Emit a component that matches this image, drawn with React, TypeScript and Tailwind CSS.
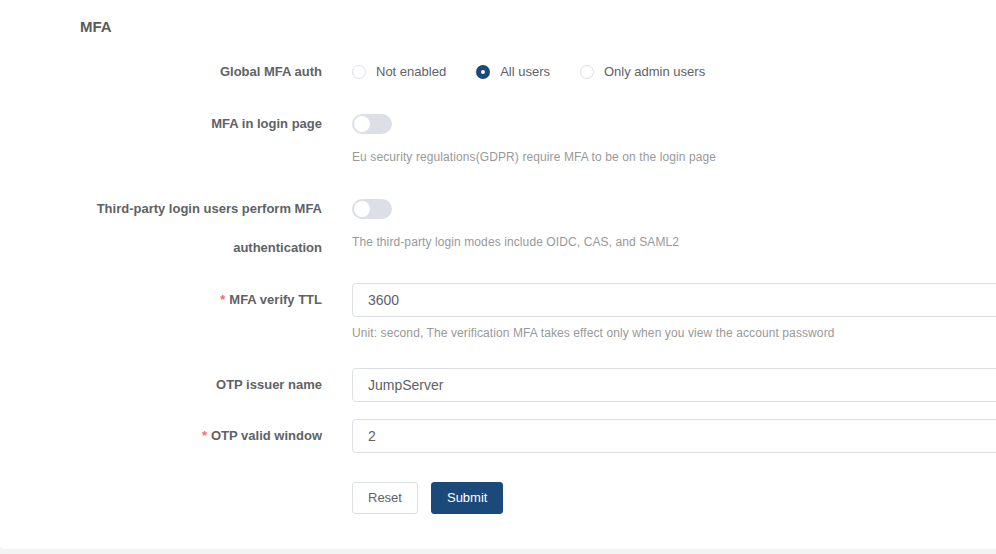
import React from "react";

const font = { fontFamily: '"Liberation Sans", Arial, sans-serif' };

function Label({ text, required, className = "" }: { text: React.ReactNode; required?: boolean; className?: string }) {
  return (
    <div className={`w-[352px] shrink-0 pr-[30px] text-right text-[13px] font-bold text-[#606266] ${className}`}>
      {required && <span className="mr-[4px] text-[#f56c6c]">*</span>}
      {text}
    </div>
  );
}

function Radio({ label, checked }: { label: string; checked?: boolean }) {
  return (
    <label className="mr-[30px] flex items-center">
      {checked ? (
        <span className="flex h-[14px] w-[14px] items-center justify-center rounded-full bg-[#1b4a7a]">
          <span className="h-[4px] w-[4px] rounded-full bg-white" />
        </span>
      ) : (
        <span className="h-[14px] w-[14px] rounded-full border border-[#dcdfe6] bg-white" />
      )}
      <span className="ml-[10px] text-[13px] text-[#606266]">{label}</span>
    </label>
  );
}

function Toggle() {
  return (
    <div className="relative h-[20px] w-[40px] rounded-full bg-[#dcdfe6]">
      <span className="absolute left-[2px] top-[2px] h-[16px] w-[16px] rounded-full bg-white" />
    </div>
  );
}

function Help({ children }: { children: React.ReactNode }) {
  return <div className="text-[12px] leading-[26px] tracking-[0.1px] text-[#999]">{children}</div>;
}

function Input({ value }: { value: string }) {
  return (
    <div className="flex h-[34px] w-full items-center rounded-[4px] border border-[#dcdfe6] px-[15px] text-[14px] text-[#606266]">
      {value}
    </div>
  );
}

export default function App() {
  return (
    <div className="w-full overflow-hidden bg-[#f3f3f4]" style={font}>
      <div className="h-[549px] w-[1100px] rounded-bl-[4px] bg-white pt-[17px]">
        <h3 className="pl-[80px] text-[15px] font-bold leading-[20px] text-[#5c5c5c]">MFA</h3>

        {/* Global MFA auth */}
        <div className="mt-[15px] flex leading-[40px]">
          <Label text="Global MFA auth" />
          <div className="flex items-center">
            <Radio label="Not enabled" />
            <Radio label="All users" checked />
            <Radio label="Only admin users" />
          </div>
        </div>

        {/* MFA in login page */}
        <div className="mt-[12px] flex leading-[40px]">
          <Label text="MFA in login page" />
          <div>
            <div className="flex h-[40px] items-center">
              <Toggle />
            </div>
            <Help>Eu security regulations(GDPR) require MFA to be on the login page</Help>
          </div>
        </div>

        {/* Third-party */}
        <div className="mt-[19px] flex">
          <Label className="leading-[39px]" text={<>Third-party login users perform MFA<br />authentication</>} />
          <div>
            <div className="flex h-[40px] items-center">
              <Toggle />
            </div>
            <Help>The third-party login modes include OIDC, CAS, and SAML2</Help>
          </div>
        </div>

        {/* MFA verify TTL */}
        <div className="mt-[13px] flex leading-[40px]">
          <Label text="MFA verify TTL" required />
          <div className="flex-1">
            <div className="flex h-[40px] items-center">
              <Input value="3600" />
            </div>
            <Help>Unit: second, The verification MFA takes effect only when you view the account password</Help>
          </div>
        </div>

        {/* OTP issuer name */}
        <div className="mt-[19px] flex leading-[40px]">
          <Label text="OTP issuer name" />
          <div className="flex h-[40px] flex-1 items-center">
            <Input value="JumpServer" />
          </div>
        </div>

        {/* OTP valid window */}
        <div className="mt-[11px] flex leading-[40px]">
          <Label text="OTP valid window" required />
          <div className="flex h-[40px] flex-1 items-center">
            <Input value="2" />
          </div>
        </div>

        {/* Actions */}
        <div className="mt-[26px] flex">
          <div className="w-[352px] shrink-0" />
          <div className="flex gap-[13px]">
            <button className="h-[32px] rounded-[3px] border border-[#dcdfe6] bg-white px-[15px] text-[13px] text-[#606266]">
              Reset
            </button>
            <button className="h-[32px] rounded-[3px] border border-[#1b4a7a] bg-[#1b4a7a] px-[15px] text-[13px] text-white">
              Submit
            </button>
          </div>
        </div>
      </div>
      <div className="h-[6px]" />
    </div>
  );
}
